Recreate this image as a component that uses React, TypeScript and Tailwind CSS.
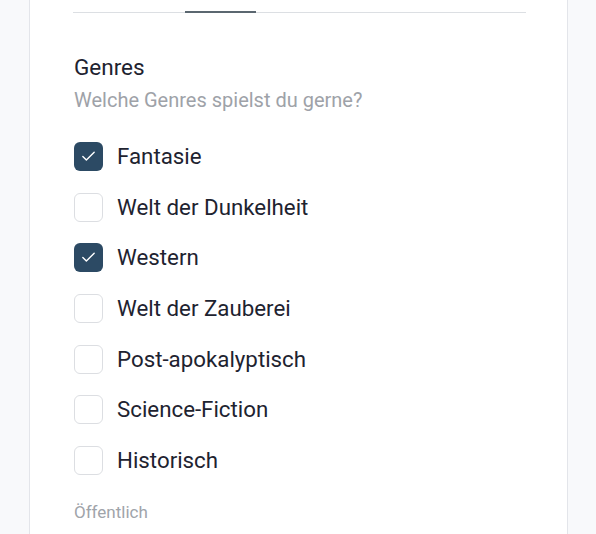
import { Check } from "lucide-react";

const genres = [
  { name: "Fantasie", checked: true },
  { name: "Welt der Dunkelheit", checked: false },
  { name: "Western", checked: true },
  { name: "Welt der Zauberei", checked: false },
  { name: "Post-apokalyptisch", checked: false },
  { name: "Science-Fiction", checked: false },
  { name: "Historisch", checked: false },
];

export default function App() {
  return (
    <div
      className="h-[534px] w-[596px] overflow-hidden bg-[#f8f9fb]"
      style={{ fontFamily: "Roboto, 'Liberation Sans', sans-serif" }}
    >
      <div className="ml-[29px] h-full w-[539px] border-x border-[#e3e5ea] bg-white">
        {/* tabs underline */}
        <div className="ml-[43px] w-[453px] pt-[12px]">
          <div className="relative h-px bg-[#dcdfe3]">
            <div className="absolute left-[112px] top-[-1px] h-[2px] w-[71px] bg-[#5b6770]" />
          </div>
        </div>

        <div className="pl-[44px] pt-[40px]">
          <h2 className="text-[22.5px] leading-[28px] text-[#1e2330]">Genres</h2>
          <p className="mt-[6px] text-[20px] leading-[26px] text-[#9ea2a8]">
            Welche Genres spielst du gerne?
          </p>

          <div className="mt-[29px] flex flex-col gap-[21.7px]">
            {genres.map((g) => (
              <label key={g.name} className="flex items-center gap-[14px]">
                {g.checked ? (
                  <span className="flex h-[29px] w-[29px] items-center justify-center rounded-[6px] bg-[#2c4a64]">
                    <Check size={17} strokeWidth={2} className="text-white" />
                  </span>
                ) : (
                  <span className="h-[29px] w-[29px] rounded-[6px] border border-[#dcdee2] bg-white" />
                )}
                <span className="text-[22.3px] leading-[29px] text-[#1e2330]">{g.name}</span>
              </label>
            ))}
          </div>

          <p className="mt-[27px] text-[17px] leading-[20px] text-[#a0a4aa]">Öffentlich</p>
        </div>
      </div>
    </div>
  );
}
